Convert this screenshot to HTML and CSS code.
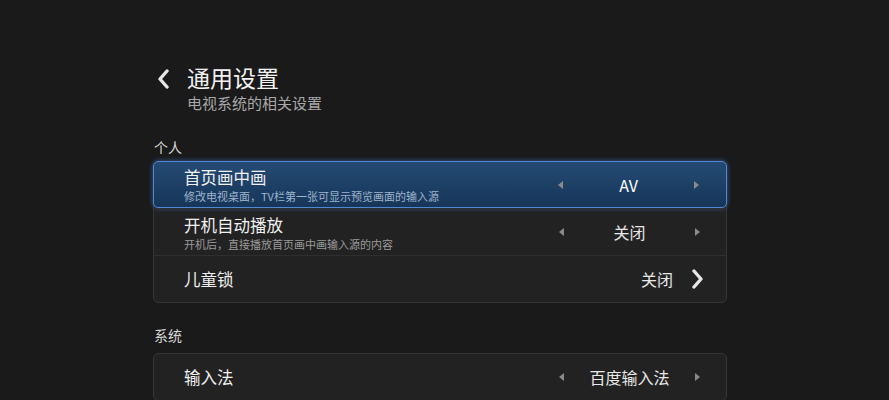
FILE: index.html
```html
<!DOCTYPE html>
<html lang="zh">
<head>
    <meta charset="UTF-8">
    <title>通用设置</title>
    <link rel="stylesheet" href="styles.css">
</head>
<body>
    <div class="page">
        <div class="header">
            <svg class="back" width="14" height="20" viewBox="0 0 14 20">
                <path d="M11 2 L4 10 L11 18" fill="none" stroke="#e6e6e6" stroke-width="3.4" stroke-linecap="round" stroke-linejoin="round"/>
            </svg>
            <div>
                <h1>通用设置</h1>
                <p class="sub">电视系统的相关设置</p>
            </div>
        </div>

        <div class="section">个人</div>
        <div class="card">
            <div class="row active">
                <div class="info">
                    <div class="name">首页画中画</div>
                    <div class="desc">修改电视桌面，TV栏第一张可显示预览画面的输入源</div>
                </div>
                <div class="picker">
                    <span class="arrow left"></span>
                    <span class="value">AV</span>
                    <span class="arrow right"></span>
                </div>
            </div>
            <div class="row">
                <div class="info">
                    <div class="name">开机自动播放</div>
                    <div class="desc">开机后，直接播放首页画中画输入源的内容</div>
                </div>
                <div class="picker">
                    <span class="arrow left"></span>
                    <span class="value">关闭</span>
                    <span class="arrow right"></span>
                </div>
            </div>
            <div class="row">
                <div class="info">
                    <div class="name">儿童锁</div>
                </div>
                <div class="link">
                    <span class="value">关闭</span>
                    <svg width="14" height="20" viewBox="0 0 14 20">
                        <path d="M3 2 L10 10 L3 18" fill="none" stroke="#e6e6e6" stroke-width="3.4" stroke-linecap="round" stroke-linejoin="round"/>
                    </svg>
                </div>
            </div>
        </div>

        <div class="section system">系统</div>
        <div class="card">
            <div class="row">
                <div class="info">
                    <div class="name">输入法</div>
                </div>
                <div class="picker">
                    <span class="arrow left"></span>
                    <span class="value">百度输入法</span>
                    <span class="arrow right"></span>
                </div>
            </div>
        </div>
    </div>
</body>
</html>
```

FILE: styles.css
```css
body {
    margin: 0;
    background-color: #1a1a1a;
    color: #ececec;
    font-family: "Noto Sans CJK SC", "Noto Sans", sans-serif;
    overflow: hidden;
}
.page {
    width: 574px;
    margin-left: 153px;
    padding-top: 61px;
}
.header {
    display: flex;
    align-items: flex-start;
}
.back {
    margin: 8px 0 0 3px;
    width: 14px;
    height: 20px;
}
.header > div {
    margin-left: 17px;
}
h1 {
    margin: 0;
    font-size: 23px;
    font-weight: normal;
    line-height: 33px;
    color: #f2f2f2;
}
.sub {
    margin: 0;
    font-size: 15px;
    line-height: 18px;
    color: #a8a8a8;
}
.section {
    margin-top: 25px;
    margin-left: 1px;
    font-size: 14px;
    line-height: 20px;
    height: 20px;
    color: #d8d8d8;
}
.section.system {
    margin-top: 22px;
    height: 24px;
}
.card {
    margin-top: 4px;
    background-color: #222222;
    border: 1px solid #363636;
    border-radius: 5px;
}
.row {
    display: flex;
    align-items: center;
    height: 46px;
    padding: 0 26px 0 30px;
    border-top: 1px solid #2e2e2e;
}
.row:first-child {
    border-top: none;
}
.row.active {
    margin: -1px -1px 0;
    height: 45px;
    padding: 0 27px 0 30px;
    background: linear-gradient(#244b74, #173559);
    border: 1px solid #5088d4;
    border-radius: 5px;
    box-shadow: 0 0 5px rgba(70, 130, 220, 0.65);
}
.info {
    flex: 1;
}
.name {
    font-size: 16.5px;
    line-height: 22px;
    color: #f0f0f0;
}
.desc {
    font-size: 11px;
    line-height: 14px;
    color: #9a9a9a;
    margin-top: 1px;
}
.active .desc {
    color: #9fb4cc;
}
.picker {
    display: flex;
    align-items: center;
    width: 141px;
}
.picker .value {
    flex: 1;
    text-align: center;
    font-size: 16px;
    color: #e8e8e8;
}
.active .picker .value {
    color: #ffffff;
}
.arrow {
    width: 0;
    height: 0;
    border-top: 4px solid transparent;
    border-bottom: 4px solid transparent;
}
.arrow.left {
    border-right: 5px solid #8a8a8a;
}
.arrow.right {
    border-left: 5px solid #8a8a8a;
}
.link {
    display: flex;
    align-items: center;
    margin-right: -5px;
}
.link .value {
    font-size: 16px;
    color: #e8e8e8;
    margin-right: 18px;
}
```
